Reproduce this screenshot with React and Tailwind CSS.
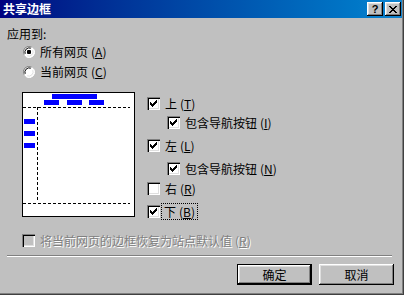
import React from "react";

const font = "font-['Noto_Sans_CJK_SC','Noto_Sans',sans-serif]";

const sunken =
  "shadow-[inset_1px_1px_#808080,inset_2px_2px_#000,inset_-1px_-1px_#fff,inset_-2px_-2px_#dfdfdf]";
const raised =
  "shadow-[inset_-1px_-1px_#000,inset_1px_1px_#fff,inset_-2px_-2px_#808080,inset_2px_2px_#dfdfdf]";

function Key({ k }) {
  return (
    <span className="ml-[3px]">
      (<span className="underline">{k}</span>)
    </span>
  );
}

function CheckMark() {
  // classic 7x7 tick
  const rows = [
    [6],
    [5, 6],
    [0, 4, 5, 6],
    [0, 1, 3, 4, 5],
    [0, 1, 2, 3, 4],
    [1, 2, 3],
    [2],
  ];
  return (
    <svg width="7" height="7" viewBox="0 0 7 7" shapeRendering="crispEdges">
      {rows.map((r, y) =>
        r.map((x) => <rect key={`${x}-${y}`} x={x} y={y} width="1" height="1" fill="#000" />)
      )}
    </svg>
  );
}

function Check({ checked, disabled }) {
  return (
    <span
      className={`w-[13px] h-[13px] shrink-0 flex items-center justify-center ${sunken} ${
        disabled ? "bg-[#c0c0c0]" : "bg-white"
      }`}
    >
      {checked && <CheckMark />}
    </span>
  );
}

function Radio({ checked }) {
  return (
    <svg width="12" height="12" viewBox="0 0 12 12" className="shrink-0">
      <circle cx="6" cy="6" r="5.5" fill="#fff" />
      <path d="M1.1 8.6 A5.5 5.5 0 0 1 8.6 1.1" stroke="#808080" strokeWidth="1" fill="none" />
      <path d="M2.2 7.8 A4.3 4.3 0 0 1 7.8 2.2" stroke="#000" strokeWidth="1" fill="none" />
      <path d="M10.9 3.4 A5.5 5.5 0 0 1 3.4 10.9" stroke="#fff" strokeWidth="1" fill="none" />
      <path d="M9.8 4.2 A4.3 4.3 0 0 1 4.2 9.8" stroke="#dfdfdf" strokeWidth="1" fill="none" />
      {checked && <rect x="4" y="4" width="4" height="4" rx="1" fill="#000" />}
    </svg>
  );
}

function Preview() {
  return (
    <svg width="113" height="125" viewBox="0 0 113 125" shapeRendering="crispEdges" className="shrink-0">
      <rect x="0.5" y="0.5" width="112" height="124" fill="#fff" stroke="#000" />
      <rect x="30" y="2" width="45" height="5" fill="#0000ff" />
      <rect x="22" y="8" width="15" height="5" fill="#0000ff" />
      <rect x="45" y="8" width="15" height="5" fill="#0000ff" />
      <rect x="67" y="8" width="15" height="5" fill="#0000ff" />
      <rect x="2" y="27" width="11" height="5" fill="#0000ff" />
      <rect x="2" y="39" width="11" height="5" fill="#0000ff" />
      <rect x="2" y="51" width="11" height="5" fill="#0000ff" />
      <line x1="1" y1="15.5" x2="108" y2="15.5" stroke="#000" strokeDasharray="3 2" />
      <line x1="15.5" y1="15" x2="15.5" y2="108" stroke="#000" strokeDasharray="3 2" />
      <line x1="1" y1="111.5" x2="108" y2="111.5" stroke="#000" strokeDasharray="3 2" />
    </svg>
  );
}

function Row({ checked, label, k, indent, focus, className = "" }) {
  return (
    <div className={`flex items-center h-[13px] ${indent ? "ml-[20px]" : ""} ${className}`}>
      <Check checked={checked} />
      <span
        className={`text-[12px] leading-[13px] whitespace-nowrap ${
          focus ? "ml-[3px] px-[1px] outline outline-1 outline-dotted outline-black outline-offset-[1px]" : "ml-[5px]"
        }`}
      >
        {label}
        <Key k={k} />
      </span>
    </div>
  );
}

export default function App() {
  return (
    <div
      className={`w-[404px] h-[295px] bg-[#c0c0c0] flex flex-col text-black ${font} shadow-[inset_-1px_-1px_#404040,inset_-2px_-2px_#808080]`}
    >
      {/* Title bar */}
      <div className="h-[18px] mr-[2px] flex items-center justify-between pl-[3px] pr-[1px] bg-gradient-to-r from-[#000080] to-[#1084d0]">
        <span className="text-white font-bold text-[12px] leading-[14px]">共享边框</span>
        <div className="flex gap-[2px]">
          <span className={`w-[16px] h-[14px] bg-[#c0c0c0] flex items-center justify-center ${raised}`}>
            <span className="text-[11px] font-bold leading-none font-['Liberation_Sans',sans-serif]">?</span>
          </span>
          <span className={`w-[16px] h-[14px] bg-[#c0c0c0] flex items-center justify-center ${raised}`}>
            <svg width="8" height="7" viewBox="0 0 8 7" shapeRendering="crispEdges">
              <path d="M0 0h2v1h-2zM6 0h2v1h-2zM1 1h2v1h-2zM5 1h2v1h-2zM2 2h4v1h-4zM3 3h2v1h-2zM2 4h4v1h-4zM1 5h2v1h-2zM5 5h2v1h-2zM0 6h2v1h-2zM6 6h2v1h-2z" fill="#000" />
            </svg>
          </span>
        </div>
      </div>

      <div className="pl-[7px] flex flex-col">
        <div className="mt-[9px] h-[14px] text-[12px] leading-[14px]">应用到:</div>

        <div className="mt-[4px] ml-[16px] h-[14px] flex items-center gap-[5px] text-[12px]">
          <Radio checked />
          <span>
            所有网页
            <Key k="A" />
          </span>
        </div>
        <div className="mt-[6px] ml-[16px] h-[14px] flex items-center gap-[5px] text-[12px]">
          <Radio />
          <span>
            当前网页
            <Key k="C" />
          </span>
        </div>

        <div className="mt-[13px] ml-[15px] flex gap-[12px]">
          <Preview />
          <div className="flex flex-col">
            <Row checked label="上" k="T" className="mt-[5px]" />
            <Row checked indent label="包含导航按钮" k="I" className="mt-[6px]" />
            <Row checked label="左" k="L" className="mt-[10px]" />
            <Row checked indent label="包含导航按钮" k="N" className="mt-[10px]" />
            <Row label="右" k="R" className="mt-[7px]" />
            <Row checked focus label="下" k="B" className="mt-[10px]" />
          </div>
        </div>

        <div className="mt-[16px] ml-[15px] h-[13px] flex items-center">
          <Check disabled />
          <span className="ml-[5px] text-[12px] leading-[13px] text-[#808080] [text-shadow:1px_1px_0_#fff]">
            将当前网页的边框恢复为站点默认值
            <Key k="R" />
          </span>
        </div>

        <div className="mt-[8px] w-[385px] border-t border-t-[#808080] border-b border-b-white" />

        <div className="mt-[7px] flex justify-end gap-[7px] pr-[10px]">
          <button className="w-[75px] h-[21px] border border-black bg-[#c0c0c0] flex items-center justify-center">
            <span className={`w-full h-full flex items-center justify-center text-[12px] ${raised}`}>确定</span>
          </button>
          <button className={`w-[75px] h-[21px] bg-[#c0c0c0] flex items-center justify-center text-[12px] ${raised}`}>
            取消
          </button>
        </div>
      </div>
    </div>
  );
}
